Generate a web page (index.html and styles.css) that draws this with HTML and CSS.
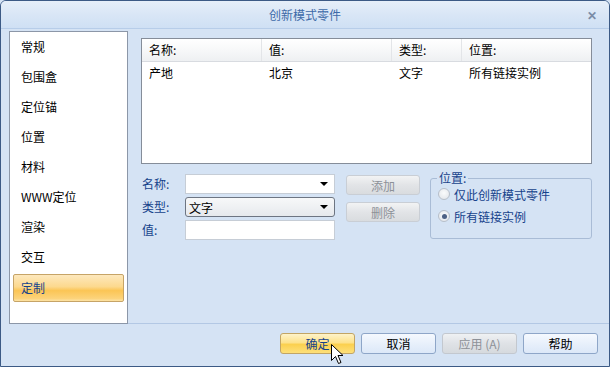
FILE: index.html
```html
<!DOCTYPE html>
<html lang="zh">
<head>
<meta charset="utf-8">
<title>创新模式零件</title>
<link rel="stylesheet" href="styles.css">
</head>
<body>
<div class="window">
  <div class="titlebar">
    <span></span>
    <span class="title">创新模式零件</span>
    <span class="close">✕</span>
  </div>
  <div class="main">
    <ul class="nav">
      <li>常规</li>
      <li>包围盒</li>
      <li>定位锚</li>
      <li>位置</li>
      <li>材料</li>
      <li>WWW定位</li>
      <li>渲染</li>
      <li>交互</li>
      <li class="active">定制</li>
    </ul>
    <div class="panel">
      <div class="table">
        <div class="thead">
          <span class="c1">名称:</span><span class="c2">值:</span><span class="c3">类型:</span><span class="c4">位置:</span>
        </div>
        <div class="row">
          <span class="c1">产地</span><span class="c2">北京</span><span class="c3">文字</span><span class="c4">所有链接实例</span>
        </div>
      </div>
      <div class="form">
        <div class="fields">
          <label class="lbl">名称:</label>
          <div class="combo"><span class="val"></span><span class="arrow"></span></div>
          <label class="lbl">类型:</label>
          <div class="combo dark"><span class="val">文字</span><span class="arrow"></span></div>
          <label class="lbl">值:</label>
          <div class="input"></div>
        </div>
        <div class="actions">
          <button class="btn disabled">添加</button>
          <button class="btn disabled">删除</button>
        </div>
        <div class="group">
          <span class="legend">位置:</span>
          <div class="radio"><span class="dot"></span>仅此创新模式零件</div>
          <div class="radio checked"><span class="dot"></span>所有链接实例</div>
        </div>
      </div>
    </div>
  </div>
  <div class="footer">
    <button class="fbtn ok">确定</button>
    <button class="fbtn">取消</button>
    <button class="fbtn disabled">应用 (A)</button>
    <button class="fbtn">帮助</button>
    <svg class="cursor" width="13" height="21" viewBox="0 0 13 21">
      <path d="M0.5 0.5 L0.5 16.5 L4.5 12.5 L7.5 19.5 L10 18.5 L7 11.5 L12 11.5 Z" fill="#fff" stroke="#000" stroke-width="1"/>
    </svg>
  </div>
</div>
</body>
</html>
```
FILE: styles.css
```css
* { box-sizing: border-box; }
html, body { margin: 0; padding: 0; background: #d5e3f4; }
body { font-family: "Noto Sans CJK SC", "Liberation Sans", sans-serif; font-size: 12px; }

.window {
  width: 610px; height: 367px;
  border: 1px solid #3c5a85;
  border-radius: 6px 6px 0 0;
  background: #d5e3f4;
  display: flex; flex-direction: column;
  overflow: hidden;
}

.titlebar {
  height: 28px;
  flex: none;
  display: grid;
  grid-template-columns: 1fr auto 1fr;
  align-items: center;
  background: linear-gradient(#e6eff9, #d9e6f6 50%, #cfe0f4);
  border-bottom: 1px solid #b7cde9;
}
.title { color: #3d6aa8; font-size: 12px; line-height: 14px; }
.close { justify-self: end; margin-right: 12px; color: #7a8ca6; font-size: 12px; font-weight: bold; line-height: 12px; }

.main { display: flex; height: 295px; flex: none; padding-left: 8px; }

.nav {
  list-style: none; margin: 2px 0 0 0; padding: 0 3px;
  width: 119px; height: 293px;
  background: #fff;
  border: 1px solid #8c97a8;
  flex: none;
}
.nav li {
  height: 30px; line-height: 30px;
  padding-left: 8px;
  color: #000;
}
.nav li.active {
  height: 28px; line-height: 26px;
  margin-top: 2px;
  background: linear-gradient(#fde8bd, #fcd98e 45%, #fbc555 60%, #fcd37a 90%, #fde3a6);
  border: 1px solid #c6a467;
  border-radius: 2px;
  color: #15428b;
  padding-left: 7px;
}

.panel {
  flex: 1;
  padding: 9px 0 0 13px;
  border-bottom: 1px solid #b3c8e4;
}

.table {
  width: 451px; height: 126px;
  background: #fff;
  border: 1px solid #858d99;
}
.thead, .row { display: flex; }
.thead {
  height: 23px; line-height: 22px;
  background: linear-gradient(#ffffff, #f7f8f9 50%, #eef0f2);
  border-bottom: 1px solid #d8dbe0;
}
.thead span { border-right: 1px solid #e3e5e8; }
.thead span.c4 { border-right: none; }
.row { height: 21px; line-height: 21px; }
.c1, .c2, .c3, .c4 { padding-left: 7px; color: #000; }
.c1 { width: 120px; }
.c2 { width: 130px; }
.c3 { width: 70px; }
.c4 { flex: 1; }

.form { display: flex; margin-top: 10px; }
.fields {
  display: grid;
  grid-template-columns: 44px 150px;
  grid-auto-rows: 20px;
  row-gap: 3px;
  align-items: center;
}
.lbl { color: #15428b; padding-left: 1px; line-height: 20px; }
.combo, .input {
  height: 20px;
  background: #fff;
  border: 1px solid #c6cdd6;
  display: flex; align-items: center;
}
.combo .val { flex: 1; padding-left: 4px; color: #000; }
.combo .arrow {
  width: 0; height: 0; margin-right: 6px;
  border-left: 4px solid transparent; border-right: 4px solid transparent;
  border-top: 4px solid #000;
}
.combo.dark {
  border: 1px solid #6d7582;
  border-radius: 3px;
  background: linear-gradient(#f7f8f9, #e6e9ed);
}
.combo.dark .val { padding-left: 3px; }

.actions { display: flex; flex-direction: column; gap: 7px; margin-left: 11px; padding-top: 1px; }
.btn {
  width: 74px; height: 20px;
  font: inherit; font-size: 12px;
  border: 1px solid #c9ced5;
  border-radius: 3px;
  background: linear-gradient(#f2f3f4, #e2e4e7 50%, #d9dcdf);
  color: #8d9198;
  padding: 0;
}

.group {
  position: relative;
  margin-left: 10px; margin-top: 4px;
  width: 162px; height: 61px;
  border: 1px solid #a9bcd6;
  border-radius: 3px;
  padding: 6px 0 0 7px;
  display: flex; flex-direction: column; gap: 4px;
}
.legend {
  position: absolute; left: 6px; top: -9px;
  background: #d5e3f4;
  padding: 0 2px;
  color: #15428b; line-height: 16px;
}
.radio { display: flex; align-items: center; color: #15428b; height: 18px; }
.dot {
  width: 12px; height: 12px; border-radius: 50%;
  border: 1px solid #b7bfca;
  background: radial-gradient(circle at 50% 40%, #fafbfc, #dfe3e8);
  margin-right: 4px; flex: none;
  display: flex; align-items: center; justify-content: center;
}
.radio.checked .dot::after {
  content: ""; width: 5px; height: 5px; border-radius: 50%;
  background: #4d6185;
}

.footer {
  flex: 1;
  display: flex; justify-content: flex-end; align-items: flex-start;
  gap: 6px;
  padding: 9px 11px 0 0;
  position: relative;
}
.fbtn {
  width: 75px; height: 21px;
  font: inherit; font-size: 12px;
  padding: 0;
  border: 1px solid #8ea6c8;
  border-radius: 3px;
  background: linear-gradient(#f5f9fe, #e8f0fb 50%, #dce8f8);
  color: #000;
}
.fbtn.ok {
  border-color: #c2a565;
  background: linear-gradient(#fef3c9, #fde28c 45%, #fbd04f 55%, #fde07a);
  color: #15428b;
}
.fbtn.disabled {
  border-color: #c3c8cf;
  background: linear-gradient(#eff1f3, #dfe2e6 50%, #d6dade);
  color: #8d9198;
}
.cursor { position: absolute; left: 330px; top: 20px; }
```
